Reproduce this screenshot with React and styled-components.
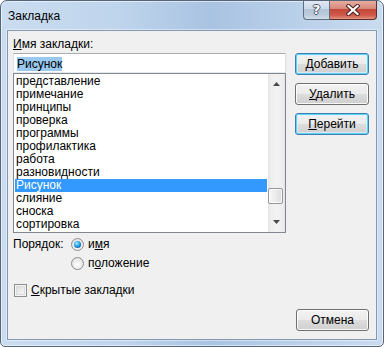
import React from 'react';
import styled, { createGlobalStyle, css } from 'styled-components';

const Global = createGlobalStyle`
  html, body { margin: 0; padding: 0; background: #fff; }
  body { font-family: "Liberation Sans", Arial, sans-serif; font-size: 12px; color: #000; }
  * { box-sizing: border-box; }
`;

const Window = styled.div`
  width: 384px;
  height: 347px;
  border: 1px solid #566678;
  border-radius: 7px 7px 5px 5px;
  background: linear-gradient(90deg, #cadcf0 0%, #bfd5ec 30%, #a9c3e2 55%, #b8cfe9 75%, #c9dbef 100%);
  box-shadow: inset 0 0 0 1px rgba(255, 255, 255, 0.55);
  display: flex;
  flex-direction: column;
  padding: 0 6px 6px;
  overflow: hidden;
`;

const TitleBar = styled.div`
  height: 29px;
  flex: none;
  display: flex;
  align-items: flex-start;
  justify-content: space-between;
`;

const Title = styled.div`
  align-self: center;
  padding-left: 1px;
  font-size: 12px;
  color: #000;
`;

const CaptionButtons = styled.div`
  display: flex;
  margin-top: -1px;
`;

const CaptionButton = styled.div`
  height: 20px;
  display: flex;
  align-items: center;
  justify-content: center;
  border: 1px solid #5f6d80;
  border-top: none;
  ${(p) =>
    p.$close
      ? css`
          width: 47px;
          border-left: none;
          border-color: #5b2c2a;
          border-radius: 0 0 4px 0;
          background: linear-gradient(180deg, #e8b2a6 0%, #d78a7c 45%, #c4493b 50%, #d0584a 80%, #e3947f 100%);
        `
      : css`
          width: 27px;
          border-radius: 0 0 0 4px;
          background: linear-gradient(180deg, #e3ebf5 0%, #ccd9e8 45%, #b3c4d8 50%, #bccbdd 80%, #d3dfec 100%);
        `}
`;

const Help = styled.span`
  font-family: "DejaVu Sans", sans-serif;
  font-weight: bold;
  font-size: 13px;
  color: #fff;
  text-shadow: 1px 0 0 #4b5563, -1px 0 0 #4b5563, 0 1px 0 #4b5563, 0 -1px 0 #4b5563;
  line-height: 1;
`;

const Client = styled.div`
  flex: 1;
  background: #f0f0f0;
  border: 1px solid #8497ae;
  box-shadow: 0 0 0 1px rgba(255, 255, 255, 0.45);
  display: flex;
  flex-direction: column;
  padding: 6px 7px 8px 5px;
`;

const Label = styled.div`
  line-height: 15px;
  height: 15px;
  white-space: nowrap;
`;

const Body = styled.div`
  margin-top: 1px;
  display: grid;
  grid-template-columns: 273px 74px;
  column-gap: 9px;
  align-items: start;
`;

const LeftCol = styled.div`
  display: flex;
  flex-direction: column;
`;

const RightCol = styled.div`
  display: flex;
  flex-direction: column;
  gap: 8px;
`;

const TextBox = styled.div`
  height: 20px;
  border: 1px solid #abadb3;
  border-left-color: #dbdfe6;
  border-right-color: #dbdfe6;
  border-bottom-color: #e3e9ef;
  background: #fff;
  padding: 3px 3px 0;
  line-height: 14px;
  white-space: nowrap;
`;

const Selection = styled.span`
  background: #99c8f0;
`;

const ListBox = styled.div`
  height: 160px;
  border: 1px solid #828790;
  background: #fff;
  display: flex;
`;

const Items = styled.div`
  flex: 1;
  padding: 1px 1px 0 1px;
`;

const Item = styled.div`
  height: 13px;
  line-height: 13px;
  padding-left: 1px;
  white-space: nowrap;
  ${(p) =>
    p.$selected &&
    css`
      background: #3399ff;
      color: #fff;
    `}
`;

const ScrollBar = styled.div`
  width: 17px;
  display: flex;
  flex-direction: column;
  background: linear-gradient(90deg, #e3e3e3 0%, #eeeeee 15%, #f2f2f2 50%, #eeeeee 85%, #e6e6e6 100%);
`;

const ArrowBox = styled.div`
  height: 17px;
  display: flex;
  justify-content: center;
  align-items: ${(p) => (p.$down ? 'flex-end' : 'flex-start')};
  padding: ${(p) => (p.$down ? '0 0 8px' : '8px 0 0')};
`;

const Track = styled.div`
  flex: 1;
  position: relative;
`;

const Thumb = styled.div`
  position: absolute;
  left: 0;
  width: 15px;
  height: 16px;
  border: 1px solid #979797;
  border-radius: 2px;
  background: linear-gradient(90deg, #f6f6f6 0%, #ececec 50%, #dcdcdc 100%);
  box-shadow: inset 0 0 0 1px rgba(255, 255, 255, 0.8);
`;

const Button = styled.button`
  height: 22px;
  width: ${(p) => p.$width || 74}px;
  font: inherit;
  font-size: 12px;
  color: #000;
  padding: 0;
  border-radius: 3px;
  border: 1px solid ${(p) => (p.$default ? '#3c7fb1' : '#707070')};
  background: linear-gradient(180deg, #f2f2f2 0%, #ebebeb 49%, #dddddd 50%, #cfcfcf 100%);
  box-shadow: ${(p) =>
    p.$default
      ? 'inset 0 0 0 1px #5fd2f5, inset 0 0 0 2px rgba(220, 245, 253, 0.6)'
      : 'inset 0 0 0 1px rgba(255, 255, 255, 0.85)'};
  line-height: 18px;
`;

const Key = styled.span`
  text-decoration: underline;
  text-underline-offset: 1px;
`;

const OrderGrid = styled.div`
  margin-top: 2px;
  display: grid;
  grid-template-columns: 58px auto;
  grid-auto-rows: 19px;
  align-items: center;
`;

const OrderLabel = styled.div`
  line-height: 15px;
`;

const OptionRow = styled.div`
  grid-column: 2;
  display: flex;
  align-items: center;
  gap: 4px;
  line-height: 15px;
`;

const Radio = styled.span`
  width: 13px;
  height: 13px;
  border-radius: 50%;
  border: 1px solid #8f8f8f;
  background: radial-gradient(circle at 50% 60%, #ffffff 0%, #f0f0f0 40%, #d6d6d6 100%);
  display: flex;
  align-items: center;
  justify-content: center;
  flex: none;
  &::after {
    content: '';
    display: ${(p) => (p.$checked ? 'block' : 'none')};
    width: 7px;
    height: 7px;
    border-radius: 50%;
    background: radial-gradient(circle at 40% 35%, #b7f1ff 0%, #38b4ea 35%, #0d5fa6 80%, #0b4f8e 100%);
  }
`;

const CheckRow = styled.div`
  margin-top: 8px;
  height: 19px;
  display: flex;
  align-items: center;
  gap: 4px;
  padding-left: 1px;
  line-height: 15px;
`;

const CheckBox = styled.span`
  width: 13px;
  height: 13px;
  border: 1px solid #8f8f8f;
  background: linear-gradient(135deg, #d9d9d9 0%, #eeeeee 60%, #fbfbfb 100%);
  box-shadow: inset 0 0 0 1px #f4f4f4, inset 0 0 0 2px #dcdcdc;
  flex: none;
`;

const Footer = styled.div`
  margin-top: auto;
  display: flex;
  justify-content: flex-end;
`;

const UpArrow = () => (
  <svg width="7" height="4" viewBox="0 0 7 4">
    <polygon points="3.5,0 7,4 0,4" fill="#4a4a4a" />
  </svg>
);

const DownArrow = () => (
  <svg width="7" height="4" viewBox="0 0 7 4">
    <polygon points="0,0 7,0 3.5,4" fill="#4a4a4a" />
  </svg>
);

const CloseGlyph = () => (
  <svg width="14" height="12" viewBox="0 0 14 12">
    <path d="M2.5 2 L11.5 10 M11.5 2 L2.5 10" stroke="#4a2020" strokeWidth="4.2" strokeLinecap="square" />
    <path d="M2.5 2 L11.5 10 M11.5 2 L2.5 10" stroke="#ffffff" strokeWidth="2.2" strokeLinecap="square" />
  </svg>
);

const items = [
  'представление',
  'примечание',
  'принципы',
  'проверка',
  'программы',
  'профилактика',
  'работа',
  'разновидности',
  'Рисунок',
  'слияние',
  'сноска',
  'сортировка',
];

export default function App() {
  return (
    <>
      <Global />
      <Window>
        <TitleBar>
          <Title>Закладка</Title>
          <CaptionButtons>
            <CaptionButton>
              <Help>?</Help>
            </CaptionButton>
            <CaptionButton $close>
              <CloseGlyph />
            </CaptionButton>
          </CaptionButtons>
        </TitleBar>
        <Client>
          <Label>
            <Key>И</Key>мя закладки:
          </Label>
          <Body>
            <LeftCol>
              <TextBox>
                <Selection>Рисунок</Selection>
              </TextBox>
              <ListBox>
                <Items>
                  {items.map((t) => (
                    <Item key={t} $selected={t === 'Рисунок'}>
                      {t}
                    </Item>
                  ))}
                </Items>
                <ScrollBar>
                  <ArrowBox>
                    <UpArrow />
                  </ArrowBox>
                  <Track>
                    <Thumb style={{ top: 97 }} />
                  </Track>
                  <ArrowBox $down>
                    <DownArrow />
                  </ArrowBox>
                </ScrollBar>
              </ListBox>
              <OrderGrid>
                <OrderLabel>Порядок:</OrderLabel>
                <OptionRow>
                  <Radio $checked />
                  <span>
                    и<Key>м</Key>я
                  </span>
                </OptionRow>
                <OptionRow>
                  <Radio />
                  <span>
                    п<Key>о</Key>ложение
                  </span>
                </OptionRow>
              </OrderGrid>
              <CheckRow>
                <CheckBox />
                <span>
                  <Key>С</Key>крытые закладки
                </span>
              </CheckRow>
            </LeftCol>
            <RightCol>
              <Button $default>
                <Key>Д</Key>обавить
              </Button>
              <Button>
                <Key>У</Key>далить
              </Button>
              <Button $default>
                <Key>П</Key>ерейти
              </Button>
            </RightCol>
          </Body>
          <Footer>
            <Button $width={73}>Отмена</Button>
          </Footer>
        </Client>
      </Window>
    </>
  );
}
